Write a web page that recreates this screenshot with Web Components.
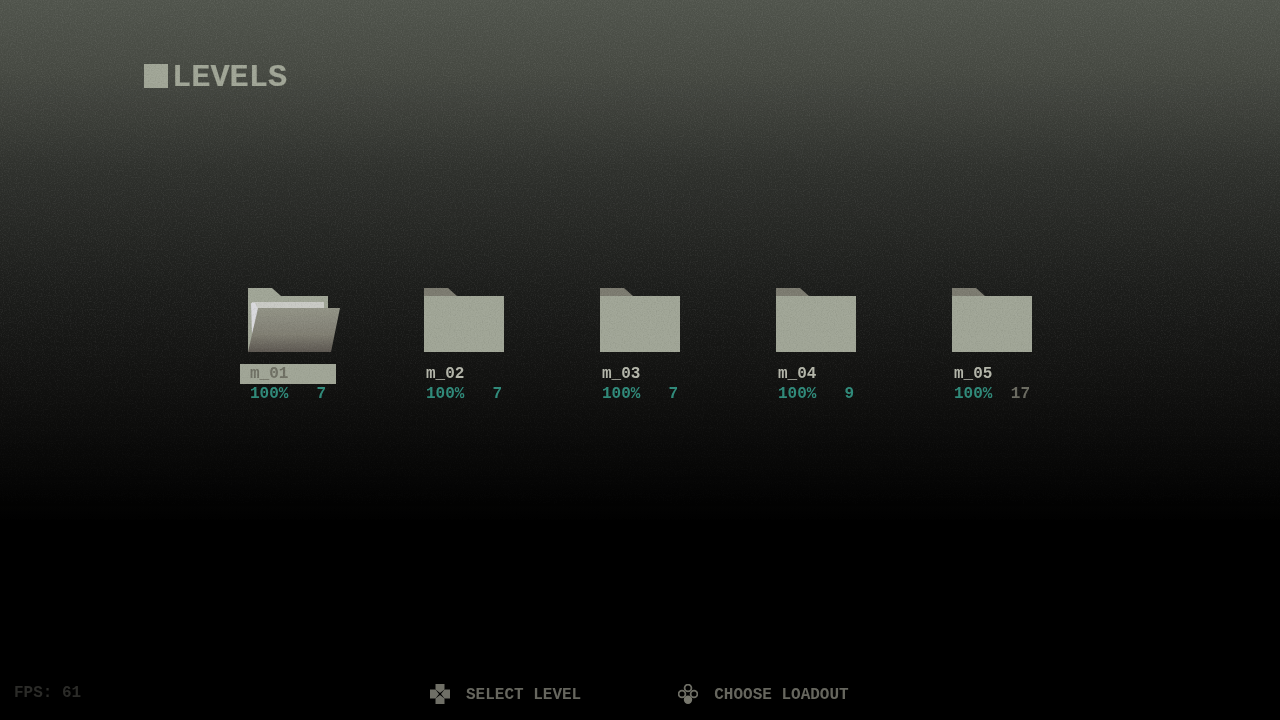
<!DOCTYPE html>
<html>
<head>
<meta charset="utf-8">
<title>Levels</title>
<style>
  html, body { margin: 0; height: 100%; background: #000; }
  body { font-family: "Liberation Mono", monospace; overflow: hidden; }
</style>
</head>
<body>
<levels-screen>
  <level-item name="m_01" pct="100%" count="7" selected></level-item>
  <level-item name="m_02" pct="100%" count="7"></level-item>
  <level-item name="m_03" pct="100%" count="7"></level-item>
  <level-item name="m_04" pct="100%" count="9"></level-item>
  <level-item name="m_05" pct="100%" count="17" dim></level-item>
</levels-screen>

<script>
const screenTemplate = document.createElement("template");
screenTemplate.innerHTML = `
  <style>
    :host {
      display: flex;
      flex-direction: column;
      position: relative;
      width: 1280px;
      height: 720px;
      overflow: hidden;
      background: linear-gradient(to bottom, #51554d 0, #474a43 70px, #2f312d 170px, #1c1d1b 290px, #0f0f0e 400px, #000 520px);
    }
    .grain {
      position: absolute;
      inset: 0;
      width: 100%;
      height: 100%;
      opacity: 0.06;
      mix-blend-mode: hard-light;
      -webkit-mask-image: linear-gradient(to bottom, #000 0, #000 320px, transparent 520px);
      mask-image: linear-gradient(to bottom, #000 0, #000 320px, transparent 520px);
    }
    .title {
      display: flex;
      align-items: center;
      gap: 4px;
      margin: 64px 0 0 144px;
      height: 24px;
      font-size: 32px;
      font-weight: bold;
      color: #a0a596;
      -webkit-text-stroke: 0.2px #a0a596;
      filter: blur(0.4px);
    }
    .title::before {
      content: "";
      width: 24px;
      height: 24px;
      background: #a0a596;
    }
    .title span { padding-top: 2px; }
    .levels {
      display: flex;
      gap: 80px;
      margin: 200px 0 0 240px;
    }
    .foot {
      position: absolute;
      left: 0;
      right: 0;
      bottom: 15px;
      display: flex;
      gap: 97px;
      padding-left: 430px;
      font-size: 16px;
      line-height: 20px;
      font-weight: bold;
      color: #66665e;
      filter: blur(0.4px);
    }
    .hint {
      display: flex;
      align-items: flex-start;
      gap: 16px;
    }
    .hint span { padding-top: 1px; }
    .hint svg { display: block; width: 20px; height: 20px; }
    .fps {
      position: absolute;
      left: 14px;
      top: 683px;
      font-size: 16px;
      line-height: 20px;
      font-weight: bold;
      color: #2b2b28;
      filter: blur(0.4px);
    }
  </style>
  <div class="title"><span>LEVELS</span></div>
  <div class="levels"><slot></slot></div>
  <svg class="grain" aria-hidden="true">
    <filter id="n" color-interpolation-filters="sRGB">
      <feTurbulence type="fractalNoise" baseFrequency="0.85" numOctaves="2" seed="4"/>
      <feColorMatrix values="1.6 0 0 0 -0.3  1.6 0 0 0 -0.3  1.6 0 0 0 -0.3  0 0 0 0 1"/>
    </filter>
    <rect width="100%" height="100%" filter="url(#n)"/>
  </svg>
  <div class="foot">
    <div class="hint">
      <svg viewBox="0 0 20 20" fill="#6f6f66">
        <path d="M5.500 0h9v5.500L10 9 5.500 5.500z"/>
        <path d="M5.500 20h9v-5.500L10 11 5.500 14.500z"/>
        <path d="M0 5.500v9h5.500L9 10 5.500 5.500z"/>
        <path d="M20 5.500v9h-5.500L11 10 14.500 5.500z"/>
      </svg>
      <span>SELECT LEVEL</span>
    </div>
    <div class="hint">
      <svg viewBox="0 0 20 20" fill="none" stroke="#6f6f66" stroke-width="1.800">
        <circle cx="10" cy="4" r="3.400"/>
        <circle cx="4" cy="10" r="3.400"/>
        <circle cx="16" cy="10" r="3.400"/>
        <circle cx="10" cy="15.800" r="4.200" fill="#77776d" stroke="none"/>
      </svg>
      <span>CHOOSE LOADOUT</span>
    </div>
  </div>
  <div class="fps">FPS: 61</div>
`;

class LevelsScreen extends HTMLElement {
  constructor() {
    super();
    const shadowRoot = this.attachShadow({ mode: "open" });
    shadowRoot.appendChild(screenTemplate.content.cloneNode(true));
  }
}

const itemTemplate = document.createElement("template");
itemTemplate.innerHTML = `
  <style>
    :host {
      display: block;
      width: 96px;
      font-size: 16px;
      line-height: 20px;
      font-weight: bold;
    }
    .icon { display: block; margin: 0 0 12px 8px; overflow: visible; filter: blur(0.3px); }
    .row {
      display: flex;
      justify-content: space-between;
      height: 20px;
      padding: 0 10px;
      filter: blur(0.3px);
    }
    .name { color: #b4b6aa; }
    :host([selected]) .name { color: #6e6f63; background: #a0a596; }
    .stats { color: #2f8a7a; }
    :host([dim]) .count { color: #6a6a60; }
  </style>
  <svg class="icon" width="80" height="64" viewBox="0 0 80 64"></svg>
  <div class="row name"></div>
  <div class="row stats"><span class="pct"></span><span class="count"></span></div>
`;

const closedFolder = `
  <path d="M0 0h24l9 8H0z" fill="#7b7a6f"/>
  <rect y="8" width="80" height="56" fill="#a0a596"/>`;

const openFolder = `
  <defs>
    <linearGradient id="front" x1="0" y1="0" x2="0" y2="1">
      <stop offset="0" stop-color="#929386"/>
      <stop offset="0.6" stop-color="#807e72"/>
      <stop offset="1" stop-color="#5b5650"/>
    </linearGradient>
  </defs>
  <path d="M0 0h24l9 8h47v12H0z" fill="#a0a596"/>
  <path d="M0 8h80v16H52L6 64H0z" fill="#a0a596"/>
  <path d="M4 14h72v8H4z" fill="#c9cac5"/>
  <path d="M3 15h4l4 8-7 24z" fill="#d9d9dd"/>
  <path d="M10 20h82l-9 44H0z" fill="url(#front)"/>`;

class LevelItem extends HTMLElement {
  constructor() {
    super();
    const shadowRoot = this.attachShadow({ mode: "open" });
    shadowRoot.appendChild(itemTemplate.content.cloneNode(true));
  }
  connectedCallback() {
    const root = this.shadowRoot;
    root.querySelector(".icon").innerHTML = this.hasAttribute("selected") ? openFolder : closedFolder;
    root.querySelector(".name").textContent = this.getAttribute("name");
    root.querySelector(".pct").textContent = this.getAttribute("pct");
    root.querySelector(".count").textContent = this.getAttribute("count");
  }
}

window.customElements.define("levels-screen", LevelsScreen);
window.customElements.define("level-item", LevelItem);
</script>
</body>
</html>
